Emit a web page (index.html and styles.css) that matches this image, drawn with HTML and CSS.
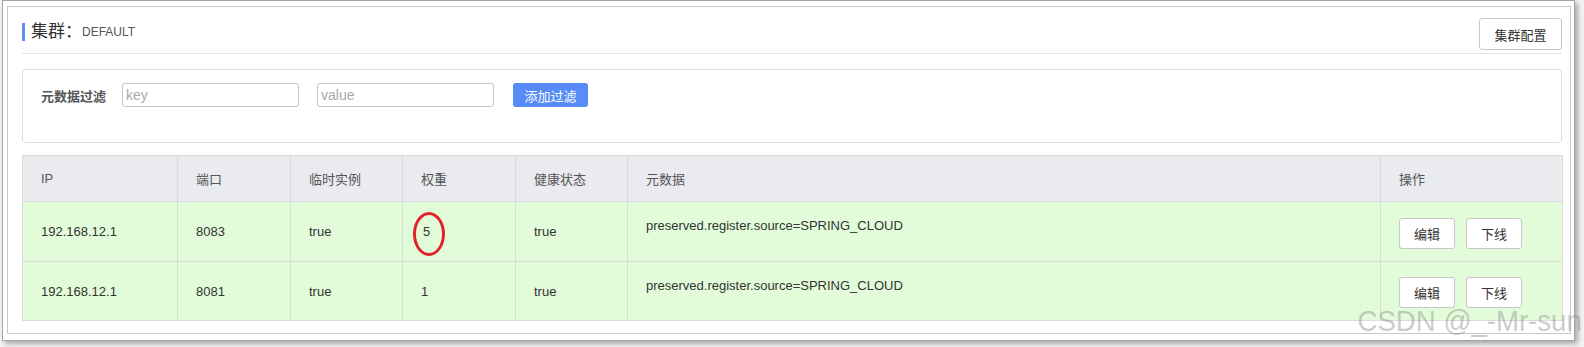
FILE: index.html
```html
<!DOCTYPE html>
<html lang="zh-CN">
<head>
    <meta charset="UTF-8">
    <meta name="viewport" content="width=device-width, initial-scale=1.0">
    <title>集群 DEFAULT</title>
    <link rel="stylesheet" href="styles.css">
</head>
<body>
    <div class="frame">
        <div class="panel">
            <div class="cluster-header">
                <div class="cluster-title">
                    <span class="title-main">集群：</span>
                    <span class="title-name">DEFAULT</span>
                </div>
                <button class="btn btn-plain btn-config">集群配置</button>
            </div>

            <div class="filter-box">
                <div class="filter-row">
                    <label class="filter-label">元数据过滤</label>
                    <input type="text" class="filter-input" placeholder="key">
                    <input type="text" class="filter-input input-value" placeholder="value">
                    <button class="btn btn-primary">添加过滤</button>
                </div>
            </div>

            <table class="instance-table">
                <colgroup>
                    <col style="width: 155px">
                    <col style="width: 113px">
                    <col style="width: 112px">
                    <col style="width: 113px">
                    <col style="width: 112px">
                    <col style="width: 753px">
                    <col style="width: 182px">
                </colgroup>
                <thead>
                    <tr>
                        <th>IP</th>
                        <th>端口</th>
                        <th>临时实例</th>
                        <th>权重</th>
                        <th>健康状态</th>
                        <th>元数据</th>
                        <th>操作</th>
                    </tr>
                </thead>
                <tbody>
                    <tr>
                        <td>192.168.12.1</td>
                        <td>8083</td>
                        <td>true</td>
                        <td><span class="marked">5</span></td>
                        <td>true</td>
                        <td class="meta">preserved.register.source=SPRING_CLOUD</td>
                        <td class="actions">
                            <button class="btn btn-plain btn-op">编辑</button><button class="btn btn-plain btn-op">下线</button>
                        </td>
                    </tr>
                    <tr>
                        <td>192.168.12.1</td>
                        <td>8081</td>
                        <td>true</td>
                        <td>1</td>
                        <td>true</td>
                        <td class="meta">preserved.register.source=SPRING_CLOUD</td>
                        <td class="actions">
                            <button class="btn btn-plain btn-op">编辑</button><button class="btn btn-plain btn-op">下线</button>
                        </td>
                    </tr>
                </tbody>
            </table>
        </div>
    </div>

    <div class="watermark">CSDN @_-Mr-sun</div>
</body>
</html>
```

FILE: styles.css
```css
* {
    box-sizing: border-box;
}

body {
    margin: 0;
    background-color: #f3f3f3;
    font-family: "Liberation Sans", "Noto Sans CJK SC", sans-serif;
    font-size: 13px;
    color: #333;
    position: relative;
    height: 347px;
    overflow: hidden;
}

.frame {
    margin-left: 2px;
    width: 1573px;
    height: 341px;
    border: 1px solid #a4a4a4;
    background-color: #fff;
    padding: 5px 3px 6px 4px;
    box-shadow: 3px 3px 5px rgba(0, 0, 0, 0.3);
}

.panel {
    height: 328px;
    border: 1px solid #c9c9c9;
    padding: 0 7px 0 14px;
}

/* title bar */
.cluster-header {
    display: flex;
    justify-content: space-between;
    align-items: center;
    height: 47px;
    padding: 11px 0 3px;
    border-bottom: 1px solid #e4e4e4;
    margin-right: 1px;
}

.cluster-title {
    display: flex;
    align-items: center;
    height: 18px;
    margin-bottom: 5px;
    border-left: 3px solid #5b8ff9;
    padding-left: 6px;
}

.title-main {
    font-size: 17px;
    color: #333;
    line-height: 18px;
}

.title-name {
    font-size: 12px;
    color: #555;
}

.btn {
    font-family: inherit;
    font-size: 13px;
    border-radius: 3px;
    cursor: pointer;
    padding: 0;
}

.btn-plain {
    background-color: #fff;
    border: 1px solid #c8c8c8;
    color: #333;
}

.btn-config {
    width: 83px;
    height: 32px;
}

/* filter */
.filter-box {
    margin-top: 15px;
    margin-right: 1px;
    height: 74px;
    border: 1px solid #dcdfe6;
    border-radius: 3px;
    padding: 13px 18px 0;
}

.filter-row {
    display: flex;
    align-items: center;
    height: 24px;
}

.filter-label {
    font-weight: bold;
    color: #555;
    width: 81px;
}

.filter-input {
    width: 177px;
    height: 24px;
    border: 1px solid #c4c6cc;
    border-radius: 3px;
    padding: 0 3px;
    font-family: inherit;
    font-size: 14px;
    color: #333;
    margin-right: 18px;
}

.filter-input::placeholder {
    color: #aaa;
}

.btn-primary {
    width: 75px;
    height: 24px;
    border: none;
    background-color: #568bf8;
    color: #fff;
    margin-left: 1px;
}

/* table */
.instance-table {
    margin-top: 12px;
    width: 1540px;
    border-collapse: collapse;
    table-layout: fixed;
}

.instance-table th,
.instance-table td {
    border: 1px solid #dadada;
    padding: 0 18px;
    text-align: left;
    vertical-align: middle;
    font-weight: normal;
}

.instance-table th {
    height: 46px;
    background-color: #eaebef;
    color: #555;
}

.instance-table td {
    height: 60px;
    background-color: #e2fcd9;
    color: #333;
}

.instance-table tbody tr:last-child td {
    height: 59px;
}

.instance-table td.meta {
    padding-bottom: 12px;
}

.actions {
    white-space: nowrap;
}

.btn-op {
    width: 56px;
    height: 31px;
    margin-right: 11px;
    margin-top: 3px;
}

.marked {
    position: relative;
    padding-left: 2px;
}

.marked::after {
    content: "";
    position: absolute;
    left: -8px;
    top: -12px;
    width: 26px;
    height: 38px;
    border: 3px solid #e3212b;
    border-radius: 50%;
}

.watermark {
    position: absolute;
    right: 2px;
    top: 306px;
    font-size: 30px;
    line-height: 30px;
    color: rgba(140, 140, 140, 0.45);
    transform: scaleX(0.92);
    transform-origin: right center;
    white-space: nowrap;
    pointer-events: none;
}
```
